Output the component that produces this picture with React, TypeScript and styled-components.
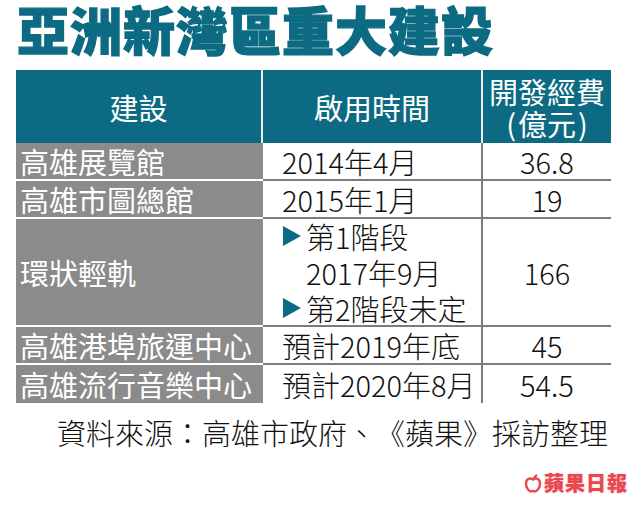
import React from 'react';
import styled, { createGlobalStyle, css } from 'styled-components';

const TEAL = '#0c6b83';
const GREY = '#8b8b8b';
const LINE = '#7c7c7c';

const GlobalStyle = createGlobalStyle`
  body {
    margin: 0;
    background: #fff;
    font-family: "Noto Sans CJK TC", "Noto Sans", sans-serif;
    text-spacing-trim: space-all;
  }
`;

const Page = styled.div`
  width: 640px;
  height: 515px;
  padding-left: 16px;
  box-sizing: border-box;
  overflow: hidden;
`;

const Title = styled.h1`
  margin: 0;
  padding-left: 1px;
  height: 62px;
  line-height: 57px;
  font-size: 52px;
  font-weight: 900;
  letter-spacing: 1px;
  color: ${TEAL};
  -webkit-text-stroke: 1.3px ${TEAL};
`;

const Table = styled.div`
  margin-top: 8px;
  width: 595px;
  display: grid;
  grid-template-columns: 247px 220px 128px;
  font-size: 29px;
  font-weight: 300;
  color: #111;
`;

const HeadCell = styled.div<{ $last?: boolean }>`
  height: 73px;
  box-sizing: border-box;
  background: ${TEAL};
  color: #fff;
  font-weight: 400;
  display: flex;
  flex-direction: column;
  align-items: center;
  justify-content: center;
  line-height: 32px;
  border-right: ${p => (p.$last ? 'none' : '2px solid #e8eef0')};
`;

const NameCell = styled.div<{ $h: number; $last?: boolean }>`
  height: ${p => p.$h}px;
  box-sizing: border-box;
  background: ${GREY};
  color: #fff;
  font-weight: 400;
  display: flex;
  align-items: center;
  padding-left: 4px;
  white-space: nowrap;
  border-bottom: ${p => (p.$last ? 'none' : '2px solid #fff')};
`;

const DataCell = styled.div<{ $h: number; $last?: boolean; $center?: boolean }>`
  height: ${p => p.$h}px;
  box-sizing: border-box;
  display: flex;
  align-items: center;
  white-space: nowrap;
  border-bottom: ${p => (p.$last ? 'none' : `2px solid ${LINE}`)};
  ${p =>
    p.$center
      ? css`
          justify-content: center;
        `
      : css`
          padding-left: 19px;
          border-right: 2px solid ${LINE};
        `}
`;

const Stack = styled.div`
  display: flex;
  flex-direction: column;
  line-height: 36px;
`;

const Line = styled.div<{ $indent?: boolean }>`
  display: flex;
  align-items: center;
  padding-left: ${p => (p.$indent ? '24px' : '0')};
`;

const Arrow = () => (
  <svg width="20" height="20" viewBox="0 0 20 20" style={{ marginRight: 4 }}>
    <polygon points="1,0 19,10 1,20" fill={TEAL} />
  </svg>
);

const Paren = styled.span`
  padding: 0 2px;
`;

const Source = styled.div`
  width: 595px;
  margin-top: 9px;
  font-size: 29px;
  font-weight: 300;
  line-height: 40px;
  text-align: right;
  padding-right: 3px;
  box-sizing: border-box;
  color: #111;
`;

const Logo = styled.div`
  margin-top: 19px;
  display: flex;
  justify-content: flex-end;
  align-items: center;
  padding-right: 12px;
  gap: 2px;
`;

const LogoText = styled.span`
  font-size: 20px;
  line-height: 24px;
  font-weight: 900;
  color: #e8474f;
  letter-spacing: 1px;
  text-shadow: 0 0 2px rgba(232, 71, 79, 0.45);
`;

const Apple = () => (
  <svg width="18" height="20" viewBox="0 0 18 20">
    <path
      d="M9 6.5 C6 4.5 2 5.5 2 10.5 C2 15 5 18.5 7 18.5 C8 18.5 8.3 18 9 18 C9.7 18 10 18.5 11 18.5 C13 18.5 16 15 16 10.5 C16 5.5 12 4.5 9 6.5 Z"
      fill="#fff"
      stroke="#e8474f"
      strokeWidth="2.4"
    />
    <path d="M9 6 C9 3.5 10.5 1.5 13.5 1.2 C13.5 4 11.5 5.5 9 6 Z" fill="#e8474f" />
  </svg>
);

type Row = { name: string; date: React.ReactNode; cost: string; h: number };

const rows: Row[] = [
  { name: '高雄展覽館', date: '2014年4月', cost: '36.8', h: 38 },
  { name: '高雄市圖總館', date: '2015年1月', cost: '19', h: 38 },
  {
    name: '環狀輕軌',
    date: (
      <Stack>
        <Line>
          <Arrow />第1階段
        </Line>
        <Line $indent>2017年9月</Line>
        <Line>
          <Arrow />第2階段未定
        </Line>
      </Stack>
    ),
    cost: '166',
    h: 108,
  },
  { name: '高雄港埠旅運中心', date: '預計2019年底', cost: '45', h: 38 },
  { name: '高雄流行音樂中心', date: '預計2020年8月', cost: '54.5', h: 38 },
];

export default function App() {
  return (
    <Page>
      <GlobalStyle />
      <Title>亞洲新灣區重大建設</Title>
      <Table>
        <HeadCell>建設</HeadCell>
        <HeadCell>啟用時間</HeadCell>
        <HeadCell $last>
          <div>開發經費</div>
          <div>
            <Paren>(</Paren>億元<Paren>)</Paren>
          </div>
        </HeadCell>
        {rows.map((r, i) => {
          const last = i === rows.length - 1;
          return (
            <React.Fragment key={r.name}>
              <NameCell $h={r.h} $last={last}>{r.name}</NameCell>
              <DataCell $h={r.h} $last={last}>{r.date}</DataCell>
              <DataCell $h={r.h} $last={last} $center>{r.cost}</DataCell>
            </React.Fragment>
          );
        })}
      </Table>
      <Source>資料來源：高雄市政府、《蘋果》採訪整理</Source>
      <Logo>
        <Apple />
        <LogoText>蘋果日報</LogoText>
      </Logo>
    </Page>
  );
}
